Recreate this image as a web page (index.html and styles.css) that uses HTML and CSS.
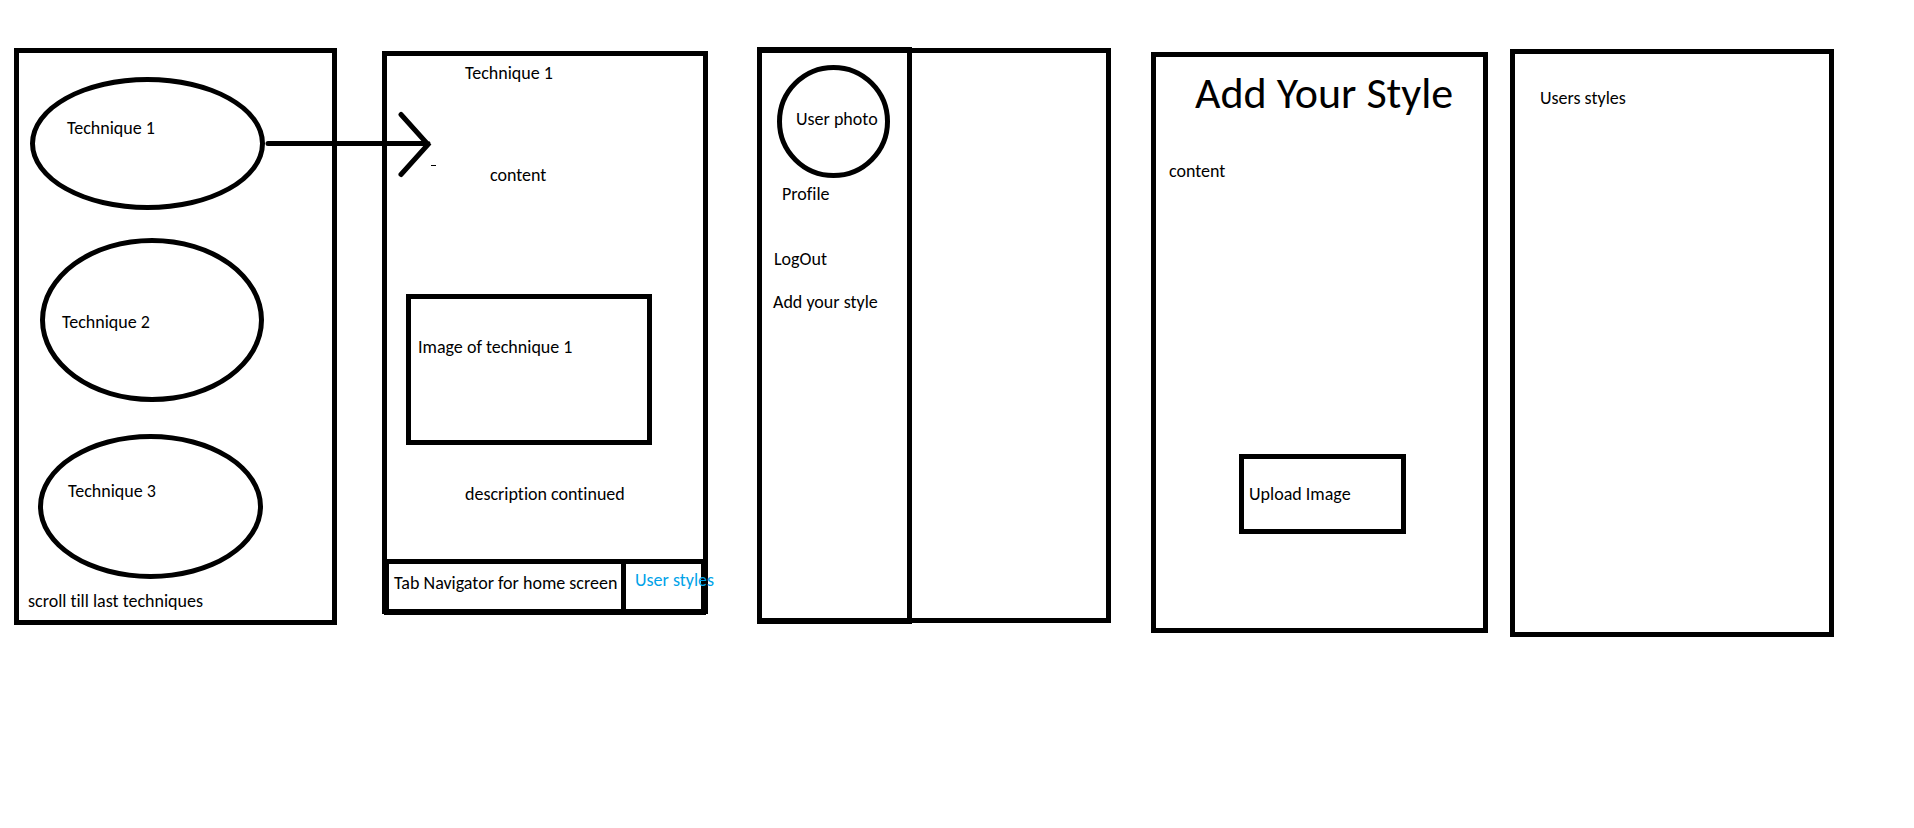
FILE: index.html
```html
<!DOCTYPE html>
<html lang="en">
<head>
<meta charset="utf-8">
<title>App wireframe</title>
<link rel="stylesheet" href="styles.css">
</head>
<body>
<main class="board">
  <section class="screen screen-home" id="home">
    <a class="bubble bubble-one" href="#technique">Technique 1</a>
    <a class="bubble bubble-two" href="#technique">Technique 2</a>
    <a class="bubble bubble-three" href="#technique">Technique 3</a>
    <p class="scroll-note">scroll till last techniques</p>
    <svg class="arrow" width="180" height="70" viewBox="0 0 180 70" aria-hidden="true">
      <path d="M5 32.500H165M138 3.500L165 33.500L138 63.500" fill="none" stroke="#000" stroke-width="5" stroke-linecap="round"/>
      <path d="M168 54.500h5" stroke="#000" stroke-width="1"/>
    </svg>
  </section>

  <section class="screen screen-technique" id="technique">
    <h2 class="technique-title">Technique 1</h2>
    <p class="technique-content">content</p>
    <div class="technique-image">Image of technique 1</div>
    <p class="technique-more">description continued</p>
    <nav class="tabs">
      <a class="tab tab-home" href="#home">Tab Navigator for home screen</a>
      <a class="tab tab-styles" href="#styles">User styles</a>
    </nav>
  </section>

  <section class="screen screen-menu">
    <nav class="drawer">
      <div class="photo">User photo</div>
      <a class="link-profile" href="#profile">Profile</a>
      <a class="link-logout" href="#logout">LogOut</a>
      <a class="link-add" href="#add">Add your style</a>
    </nav>
  </section>

  <section class="screen screen-add" id="add">
    <h1 class="add-title">Add Your Style</h1>
    <p class="add-content">content</p>
    <button class="upload" type="button">Upload Image</button>
  </section>

  <section class="screen screen-styles" id="styles">
    <h2 class="styles-title">Users styles</h2>
  </section>
</main>
</body>
</html>
```

FILE: styles.css
```css
* { box-sizing: border-box; }

body {
  margin: 0;
  background: #fff;
  color: #000;
  font: 18px/24px Carlito, Calibri, Lato, sans-serif;
  font-variant-ligatures: none;
}

h1, h2, p { margin: 0; font-size: inherit; font-weight: 400; }
a { color: inherit; text-decoration: none; white-space: nowrap; }

.board {
  display: grid;
  grid-template-columns: minmax(0, 368fr) minmax(0, 375fr) minmax(0, 394fr) minmax(0, 359fr) minmax(0, 324fr);
  align-items: start;
  padding: 47px 80px 0 14px;
}

.screen {
  display: flex;
  flex-direction: column;
  align-items: flex-start;
  border: 5px solid #000;
}

/* Home: list of techniques */
.screen-home {
  position: relative;
  margin: 1px 45px 0 0;
  padding: 24px 9px 7px;
}
.bubble { border: 5px solid #000; border-radius: 50%; }
.bubble-one { width: 235px; height: 133px; margin-left: 2px; padding: 34px 0 0 32px; }
.bubble-two { width: 224px; height: 164px; margin: 28px 0 0 12px; padding: 67px 0 0 17px; }
.bubble-three { width: 225px; height: 145px; margin: 32px 0 0 10px; padding: 40px 0 0 25px; }
.scroll-note { margin-top: 10px; }
.arrow { position: absolute; top: 58px; left: 244px; z-index: 1; }

/* Technique detail */
.screen-technique { margin: 4px 49px 0 0; padding-top: 5px; }
.technique-title { margin-left: 78px; }
.technique-content { margin: 78px 0 0 103px; }
.technique-image {
  width: 246px;
  height: 151px;
  margin: 107px 0 0 19px;
  padding: 36px 0 0 7px;
  border: 5px solid #000;
}
.technique-more { margin: 37px 0 0 78px; }
.tabs {
  display: flex;
  align-self: stretch;
  height: 56px;
  margin: 53px -3px -6px;
  border: 5px solid #000;
}
.tab { min-width: 0; }
.tab-home { flex: 1; padding: 7px 0 0 5px; }
.tab-styles { width: 80px; padding: 4px 0 0 9px; border-left: 5px solid #000; color: #00a2e8; }

/* Side menu */
.screen-menu { height: 575px; margin: 1px 40px 0 0; }
.drawer {
  display: flex;
  flex-direction: column;
  align-items: flex-start;
  width: 155px;
  height: 577px;
  margin: -6px 0 -6px -5px;
  padding: 13px 11px 0;
  border: 5px solid #000;
  box-shadow: inset 0 1px #000, inset 0 -1px #000;
}
.photo {
  width: 113px;
  height: 113px;
  margin-left: 4px;
  padding: 37px 0 0 14px;
  border: 5px solid #000;
  border-radius: 50%;
  white-space: nowrap;
}
.link-profile { margin: 4px 0 0 9px; }
.link-logout { margin: 41px 0 0 1px; }
.link-add { margin-top: 19px; }

/* Add a style */
.screen-add { margin: 5px 22px 0 0; padding: 12px 0 94px; }
.add-title { margin-left: 39px; font-size: 44px; line-height: 48px; white-space: nowrap; }
.add-content { margin: 42px 0 0 13px; }
.upload {
  width: 167px;
  height: 80px;
  margin: 271px 0 0 83px;
  padding: 0 5px;
  border: 5px solid #000;
  background: #fff;
  color: inherit;
  font: inherit;
  text-align: left;
}

/* Users' styles */
.screen-styles { min-height: 588px; margin-top: 2px; padding: 32px 25px; }
```
